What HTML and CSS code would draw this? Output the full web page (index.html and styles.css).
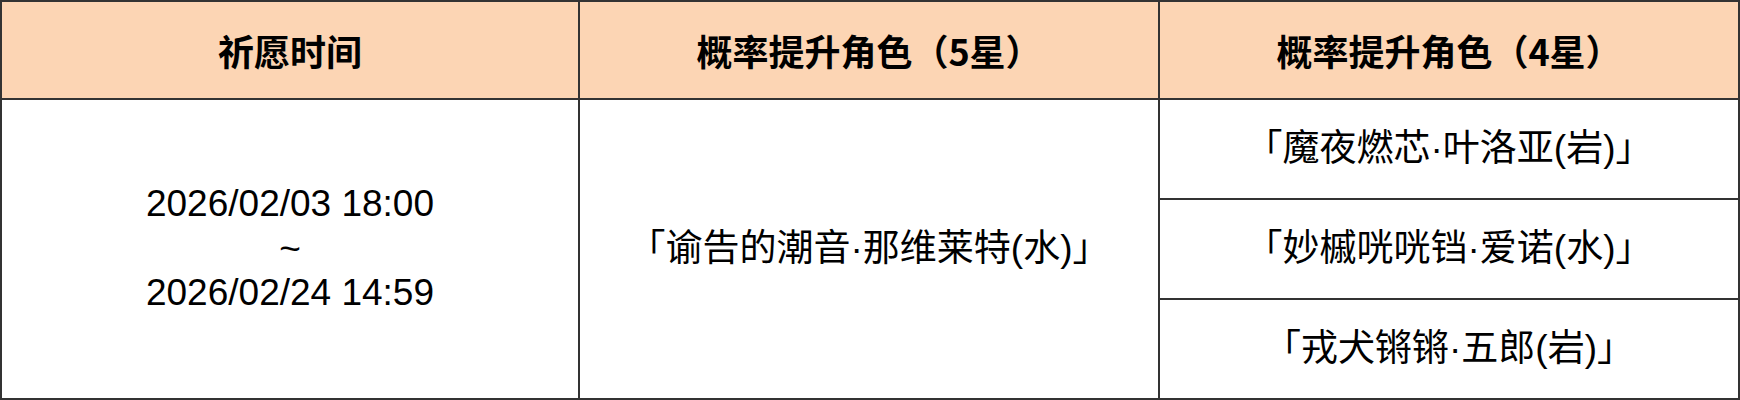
FILE: index.html
```html
<!DOCTYPE html>
<html lang="zh-CN">
<head>
<meta charset="utf-8">
<title>祈愿</title>
<link rel="stylesheet" href="styles.css">
</head>
<body>
<div class="sheet">
  <div class="cell head">祈愿时间</div>
  <div class="cell head">概率提升角色（5星）</div>
  <div class="cell head">概率提升角色（4星）</div>
  <div class="cell body span time">2026/02/03 18:00<br>~<br>2026/02/24 14:59</div>
  <div class="cell body span">「谕告的潮音·那维莱特(水)」</div>
  <div class="cell body">「魔夜燃芯·叶洛亚(岩)」</div>
  <div class="cell body">「妙槭咣咣铛·爱诺(水)」</div>
  <div class="cell body">「戎犬锵锵·五郎(岩)」</div>
</div>
</body>
</html>
```
FILE: styles.css
```css
html, body {
  margin: 0;
  padding: 0;
  background: #ffffff;
}
.sheet {
  box-sizing: border-box;
  width: 1740px;
  height: 400px;
  display: grid;
  grid-template-columns: 576px 578px 578px;
  grid-template-rows: 96px 98px 98px 98px;
  gap: 2px;
  padding: 2px;
  background: #333333;
}
.cell {
  display: flex;
  align-items: center;
  justify-content: center;
  text-align: center;
  color: #000000;
  background: #ffffff;
}
.head {
  background: #fcd5b4;
  font-family: "Noto Sans CJK SC", sans-serif;
  font-weight: 700;
  font-size: 36px;
}
.body {
  font-family: "Liberation Sans", "Noto Sans CJK SC", sans-serif;
  font-size: 37px;
  line-height: 1.2;
}
.span {
  grid-row: 2 / 5;
}
```
